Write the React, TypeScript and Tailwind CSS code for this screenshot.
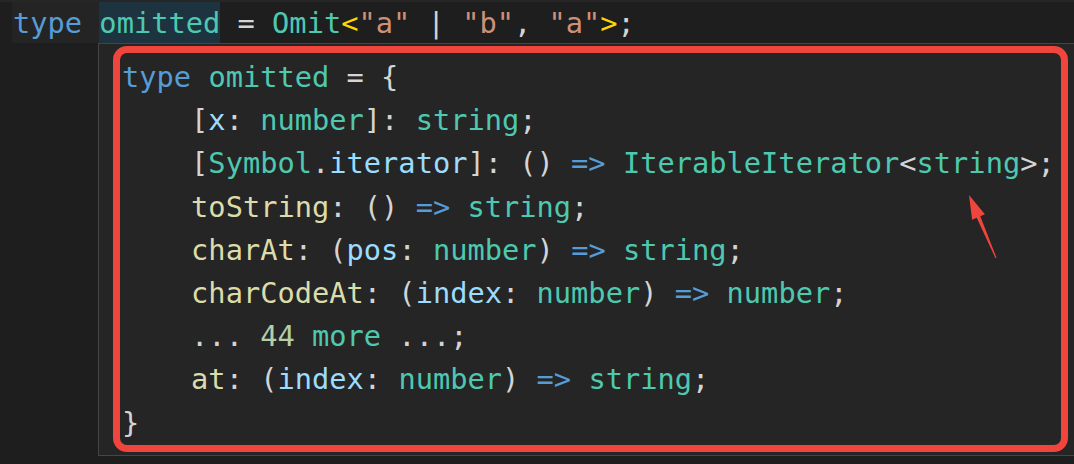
import React from "react";

type Tok = [string, string];

const P = "text-[#d4d4d4]";
const K = "text-[#569cd6]";
const T = "text-[#4ec9b0]";
const V = "text-[#9cdcfe]";
const F = "text-[#dcdcaa]";
const S = "text-[#ce9178]";
const N = "text-[#b5cea8]";
const Y = "text-[#ffd700]";

const lines: Tok[][] = [
  [[K, "type"], [P, " "], [T, "omitted"], [P, " = {"]],
  [[P, "    ["], [V, "x"], [P, ": "], [T, "number"], [P, "]: "], [T, "string"], [P, ";"]],
  [
    [P, "    ["],
    [T, "Symbol"],
    [P, "."],
    [V, "iterator"],
    [P, "]: () "],
    [K, "=>"],
    [P, " "],
    [T, "IterableIterator"],
    [P, "<"],
    [T, "string"],
    [P, ">;"],
  ],
  [[P, "    "], [F, "toString"], [P, ": () "], [K, "=>"], [P, " "], [T, "string"], [P, ";"]],
  [
    [P, "    "],
    [F, "charAt"],
    [P, ": ("],
    [V, "pos"],
    [P, ": "],
    [T, "number"],
    [P, ") "],
    [K, "=>"],
    [P, " "],
    [T, "string"],
    [P, ";"],
  ],
  [
    [P, "    "],
    [F, "charCodeAt"],
    [P, ": ("],
    [V, "index"],
    [P, ": "],
    [T, "number"],
    [P, ") "],
    [K, "=>"],
    [P, " "],
    [T, "number"],
    [P, ";"],
  ],
  [[P, "    ... "], [N, "44"], [P, " "], [T, "more"], [P, " ...;"]],
  [
    [P, "    "],
    [F, "at"],
    [P, ": ("],
    [V, "index"],
    [P, ": "],
    [T, "number"],
    [P, ") "],
    [K, "=>"],
    [P, " "],
    [T, "string"],
    [P, ";"],
  ],
  [[P, "}"]],
];

export default function App() {
  return (
    <div className="w-[1074px] h-[464px] bg-[#1e1e1e] overflow-hidden font-['DejaVu_Sans_Mono','Liberation_Mono',monospace] text-[28.7px] leading-[43px]">
      <div className="h-[43px] flex items-stretch pl-[12px] whitespace-pre border-t-2 border-[#262626]">
        <span className="bg-[#242424] text-[#569cd6] pl-px">type </span>
        <span className="bg-[#1d3440] text-[#4ec9b0]">omitted</span>
        <span className={P}> = </span>
        <span className={T}>Omit</span>
        <span className={Y}>&lt;</span>
        <span className={S}>"a"</span>
        <span className={P}> | </span>
        <span className={S}>"b"</span>
        <span className={P}>, </span>
        <span className={S}>"a"</span>
        <span className={Y}>&gt;</span>
        <span className={P}>;</span>
      </div>
      <div className="ml-[98px] h-[413px] border-l border-b border-t border-[#454545] bg-[#252526] pt-[2px] pl-[14px] pr-[6px]">
        <div className="relative h-[406px] border-[7px] border-[#f0453c] rounded-[14px] pt-[3px] pl-[2px]">
          {lines.map((ln, i) => (
            <div key={i} className="h-[43.2px] leading-[43.2px] whitespace-pre">
              {ln.map(([c, t], j) => (
                <span key={j} className={c}>
                  {t}
                </span>
              ))}
            </div>
          ))}
          <svg
            className="absolute left-[840px] top-[132px]"
            width="45"
            height="80"
            viewBox="0 0 45 80"
          >
            <polygon
              points="9,10 24.9,29.2 20.3,31.2 36.5,72.8 35.5,73.2 16.7,32.8 12.1,34.8"
              fill="#f0453c"
            />
          </svg>
        </div>
      </div>
    </div>
  );
}
